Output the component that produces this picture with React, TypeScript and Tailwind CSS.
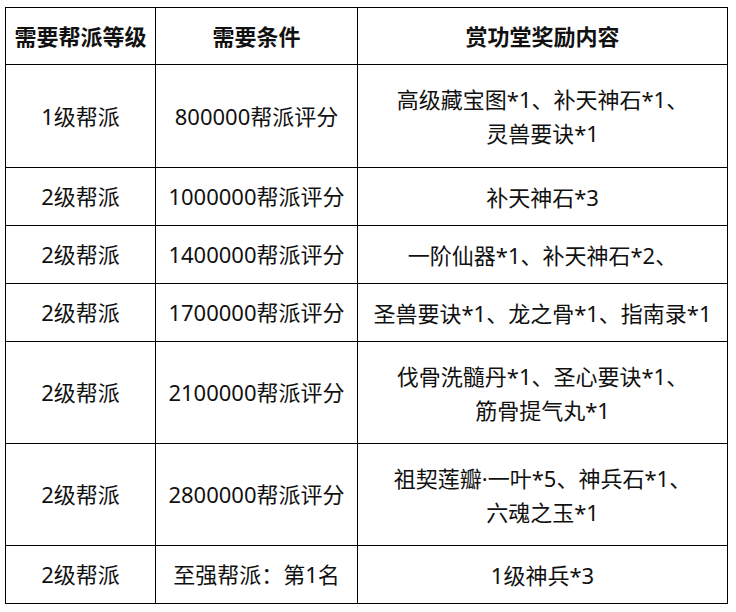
import React from "react";

const rows: { level: string; need: string; reward: string[]; h: string }[] = [
  { level: "1级帮派", need: "800000帮派评分", reward: ["高级藏宝图*1、补天神石*1、", "灵兽要诀*1"], h: "h-[103px]" },
  { level: "2级帮派", need: "1000000帮派评分", reward: ["补天神石*3"], h: "h-[58px]" },
  { level: "2级帮派", need: "1400000帮派评分", reward: ["一阶仙器*1、补天神石*2、"], h: "h-[58px]" },
  { level: "2级帮派", need: "1700000帮派评分", reward: ["圣兽要诀*1、龙之骨*1、指南录*1"], h: "h-[58px]" },
  { level: "2级帮派", need: "2100000帮派评分", reward: ["伐骨洗髓丹*1、圣心要诀*1、", "筋骨提气丸*1"], h: "h-[102px]" },
  { level: "2级帮派", need: "2800000帮派评分", reward: ["祖契莲瓣·一叶*5、神兵石*1、", "六魂之玉*1"], h: "h-[102px]" },
  { level: "2级帮派", need: "至强帮派：第1名", reward: ["1级神兵*3"], h: "h-[58px]" },
];

export default function App() {
  return (
    <div
      className="min-h-screen bg-white pt-[7px] pl-[5px] text-[#111]"
      style={{ fontFamily: '"Noto Sans", "Noto Sans CJK SC", sans-serif' }}
    >
      <table className="border-collapse table-fixed w-[722px] text-[22px]">
        <colgroup>
          <col className="w-[150px]" />
          <col className="w-[202px]" />
          <col className="w-[370px]" />
        </colgroup>
        <thead>
          <tr className="h-[57px]">
            <th className="border border-black font-bold p-0">需要帮派等级</th>
            <th className="border border-black font-bold p-0">需要条件</th>
            <th className="border border-black font-bold p-0">赏功堂奖励内容</th>
          </tr>
        </thead>
        <tbody>
          {rows.map((r, i) => (
            <tr key={i} className={r.h}>
              <td className="border border-black text-center p-0">{r.level}</td>
              <td className="border border-black text-center p-0 whitespace-nowrap">{r.need}</td>
              <td className="border border-black text-center p-0 leading-[34px]">
                {r.reward.map((line, j) => (
                  <div key={j} className="whitespace-nowrap">{line}</div>
                ))}
              </td>
            </tr>
          ))}
        </tbody>
      </table>
    </div>
  );
}
